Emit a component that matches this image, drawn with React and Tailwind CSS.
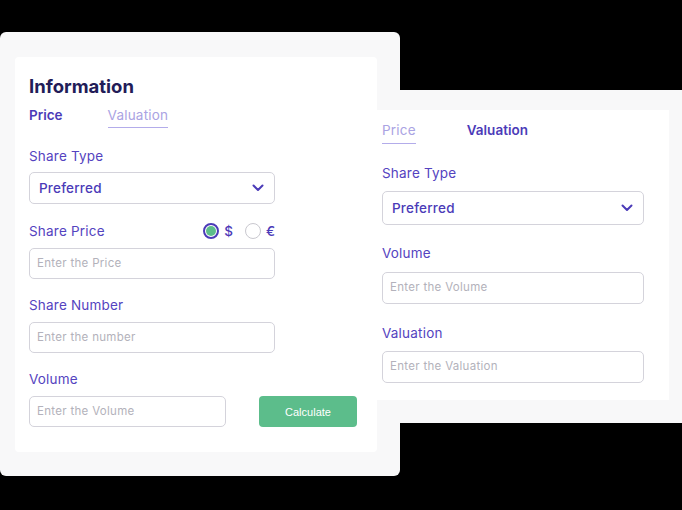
import React from "react";

const font = { fontFamily: "Inter, 'Open Sans', sans-serif" };

function Chevron() {
  return (
    <svg width="12" height="8" viewBox="0 0 12 8" fill="none">
      <path d="M1.5 1.5L6 6L10.5 1.5" stroke="#4b3bb8" strokeWidth="2" strokeLinecap="round" strokeLinejoin="round" />
    </svg>
  );
}

function Label({ children, className = "" }) {
  return (
    <div className={"text-[13.5px] leading-[20px] font-normal tracking-[0.2px] text-[#5443c0] " + className}>{children}</div>
  );
}

function Field({ placeholder, className = "" }) {
  return (
    <div className={"flex items-center rounded-[5px] border border-[#d4d3db] bg-white px-[7px] text-[11.5px] tracking-[0.3px] text-[#b3b2bb] " + className}>
      {placeholder}
    </div>
  );
}

function Select({ className = "" }) {
  return (
    <div className={"flex items-center justify-between rounded-[5px] border border-[#d4d3db] bg-white pl-[9px] pr-[10px] " + className}>
      <span className="text-[13.5px] font-medium tracking-[0.2px] text-[#4b3bb8]">Preferred</span>
      <Chevron />
    </div>
  );
}

export default function App() {
  return (
    <div className="relative w-[682px] h-[510px] overflow-hidden bg-black" style={font}>
      {/* soft backdrop areas */}
      <div className="absolute left-0 top-[32px] w-[400px] h-[444px] rounded-[6px] bg-[#f8f8f9]" />
      <div className="absolute left-[370px] top-[90px] w-[312px] h-[333px] rounded-l-[6px] bg-[#f8f8f9]" />

      {/* right card */}
      <div className="absolute left-[377px] top-[110px] w-[292px] h-[290px] bg-white flex flex-col pl-[5px] pt-[10px]">
        <div className="flex items-start h-[24px]">
          <div className="text-[13.5px] leading-[20px] font-normal tracking-[0.2px] text-[#aaa3e3] border-b border-[#b3acea] pb-[3px]">Price</div>
          <div className="ml-[51px] text-[13.5px] leading-[20px] font-semibold text-[#4b3bb8]">Valuation</div>
        </div>
        <Label className="mt-[19px]">Share Type</Label>
        <Select className="mt-[8px] w-[262px] h-[34px]" />
        <Label className="mt-[18px]">Volume</Label>
        <Field placeholder="Enter the Volume" className="mt-[9px] w-[262px] h-[32px]" />
        <Label className="mt-[19px]">Valuation</Label>
        <Field placeholder="Enter the Valuation" className="mt-[8px] w-[262px] h-[32px]" />
      </div>

      {/* left card */}
      <div className="absolute left-[15px] top-[57px] w-[362px] h-[395px] rounded-[4px] bg-white flex flex-col pl-[14px] pt-[17px]">
        <div className="text-[18.5px] leading-[24px] font-bold text-[#221c58]">Information</div>
        <div className="mt-[7px] flex items-start h-[24px]">
          <div className="text-[13.5px] leading-[20px] font-semibold text-[#4b3bb8]">Price</div>
          <div className="ml-[45px] text-[13.5px] leading-[20px] font-normal tracking-[0.2px] text-[#aaa3e3] border-b border-[#b3acea] pb-[2px]">Valuation</div>
        </div>
        <Label className="mt-[17px]">Share Type</Label>
        <Select className="mt-[6px] w-[246px] h-[32px]" />
        <div className="mt-[17px] w-[246px] flex items-center justify-between">
          <Label>Share Price</Label>
          <div className="flex items-center">
            <span className="flex items-center justify-center w-[16px] h-[16px] rounded-full border-2 border-[#4b3bb8]">
              <span className="w-[10px] h-[10px] rounded-full bg-[#5cbd8b]" />
            </span>
            <span className="ml-[5px] text-[13.5px] font-medium text-[#4b3bb8]">$</span>
            <span className="ml-[12px] w-[16px] h-[16px] rounded-full border border-[#c9c8cf]" />
            <span className="ml-[5px] text-[13.5px] font-medium text-[#4b3bb8]">€</span>
          </div>
        </div>
        <Field placeholder="Enter the Price" className="mt-[7px] w-[246px] h-[31px]" />
        <Label className="mt-[16px]">Share Number</Label>
        <Field placeholder="Enter the number" className="mt-[7px] w-[246px] h-[31px]" />
        <Label className="mt-[16px]">Volume</Label>
        <div className="mt-[7px] flex items-center">
          <Field placeholder="Enter the Volume" className="w-[197px] h-[31px]" />
          <div
            className="ml-[33px] w-[98px] h-[31px] rounded-[4px] bg-[#5cbd8b] flex items-center justify-center text-white text-[11px]"
            style={{ fontFamily: "'Liberation Sans', Arial, sans-serif" }}
          >
            Calculate
          </div>
        </div>
      </div>
    </div>
  );
}
